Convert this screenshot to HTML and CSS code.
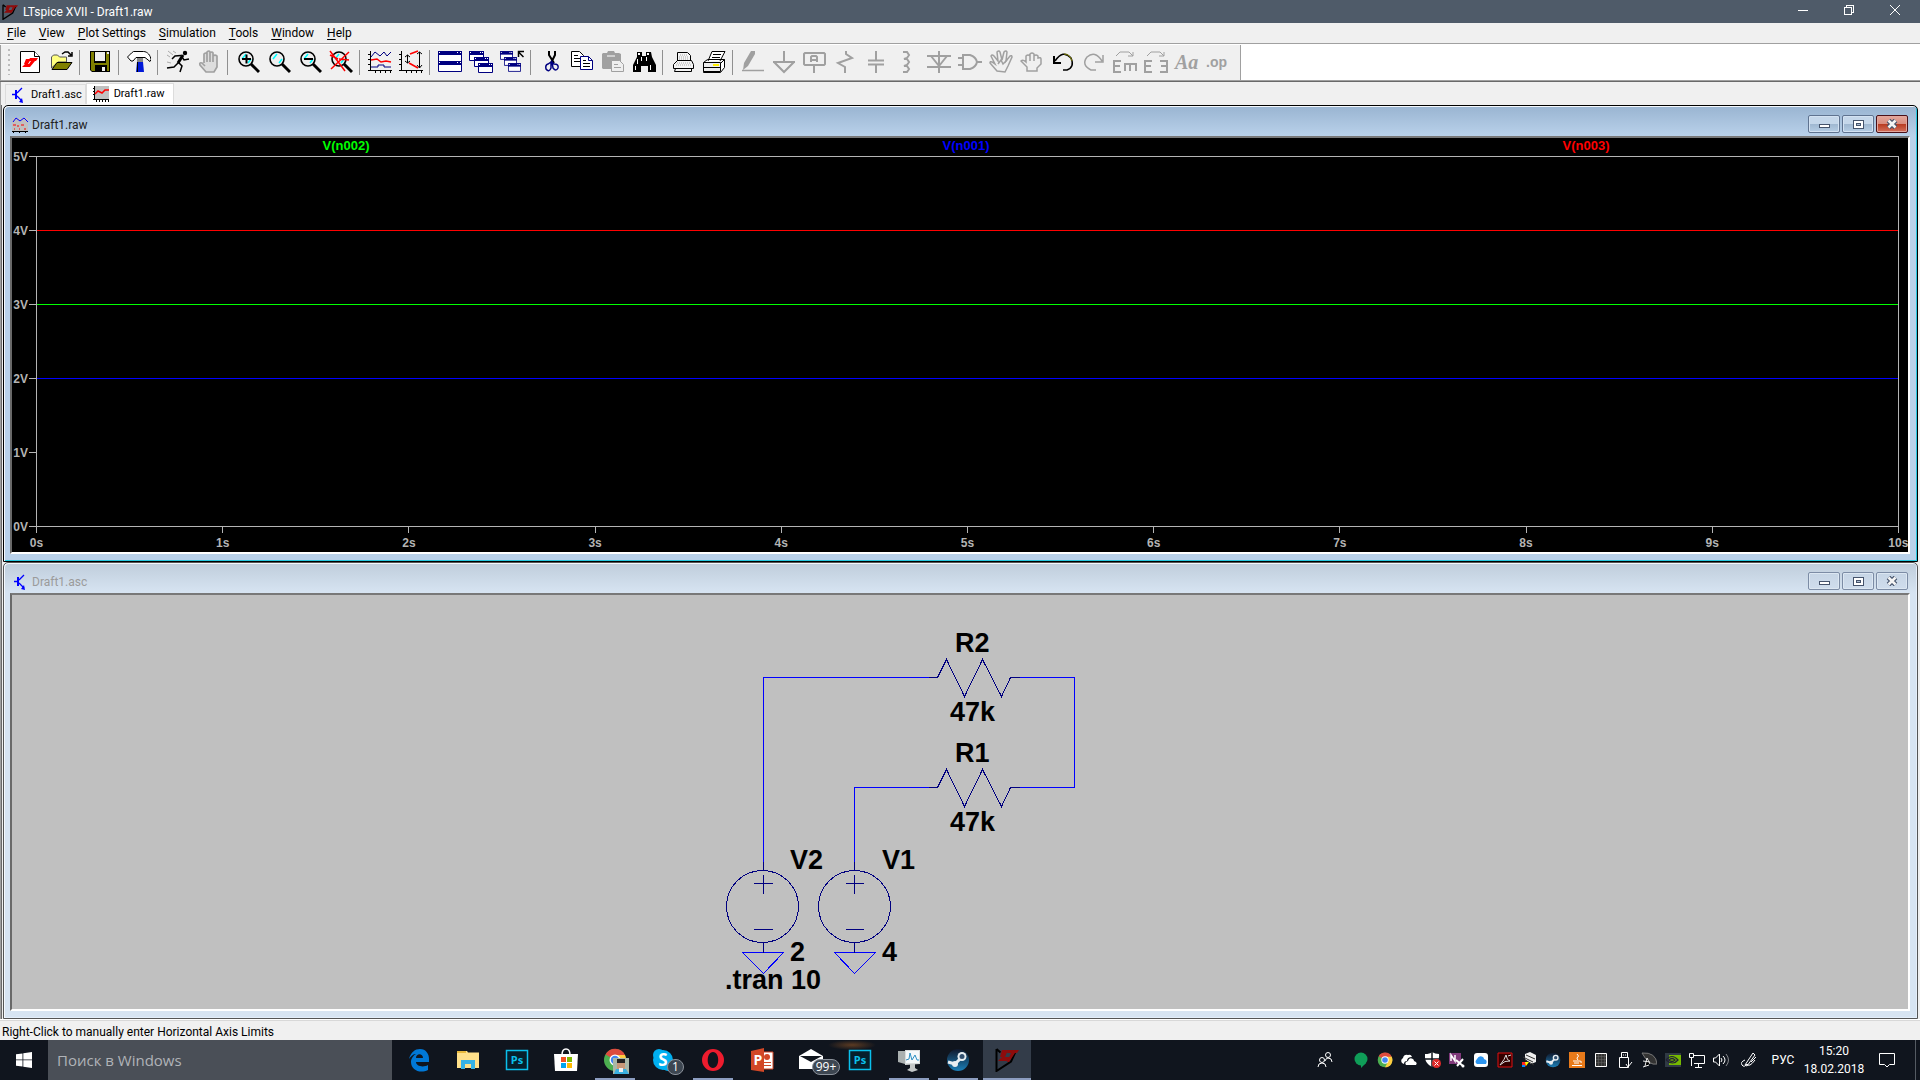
FILE: index.html
```html
<!DOCTYPE html>
<html lang="en">
<head>
<meta charset="utf-8">
<title>LTspice XVII - Draft1.raw</title>
<link rel="stylesheet" href="styles.css">
</head>
<body>
<svg class="defs" aria-hidden="true">
  <symbol id="lt" viewBox="0 0 24 24"><path d="M1.500 1v22L16 13.500 21 2.500M1.500 1l4 3.500" fill="none" stroke="#000" stroke-width="2"/><path d="M7 2h6l-3 7h5l-3 4H3l4-4h-2zM13 2h11l-2 3h-2l-6 9h-2l4-9h-4z" fill="#8e0c0c"/></symbol>
  <symbol id="npn" viewBox="0 0 16 16"><path d="M2 7.500h4M7 6l5-5M7 9l5 5" fill="none" stroke="#00f" stroke-width="1.300"/><path d="M5 3h2v9H5zM13 16l-4-1 3-4z" fill="#00f"/></symbol>
  <symbol id="bin" viewBox="0 0 11 8"><path d="M0 4h11v4H0z" fill="#45536b"/><path d="M1 5h9v2H1z" fill="#fff"/></symbol>
  <symbol id="bmax" viewBox="0 0 11 9"><path d="M0 0h11v9H0z" fill="#45536b"/><path d="M1 1h9v7H1z" fill="#fff"/><path d="M3 3h5v3H3z" fill="#45536b"/><path d="M4 4h3v1H4z" fill="#aebfd2"/></symbol>
  <symbol id="bx" viewBox="0 0 12 10"><path d="M2.500 1.500l7 7M9.500 1.500l-7 7" stroke="#45536b" stroke-width="5"/><path d="M2.500 1.500l7 7M9.500 1.500l-7 7" stroke="#f4f4f4" stroke-width="2.600"/></symbol>
  <symbol id="lens" viewBox="0 0 24 24"><path d="M14 14l8 8" stroke="#000" stroke-width="3"/><circle cx="9" cy="9" r="7" fill="#eee" stroke="#000" stroke-width="1.600"/><path d="M5 9l4-5M11 13l3-4" stroke="#0ff" stroke-width="1.500"/></symbol>
  <symbol id="chrome" viewBox="0 0 24 24"><circle cx="12" cy="12" r="11" fill="#4caf50"/><path d="M12 12 2.500 6.500A11 11 0 0 1 22 7z" fill="#dd4b3e"/><path d="M12 7h10a11 11 0 0 1-10 16l5-9z" fill="#ffcd40"/><circle cx="12" cy="12" r="5.500" fill="#fff"/><circle cx="12" cy="12" r="4.200" fill="#4285f4"/></symbol>
  <symbol id="steam" viewBox="0 0 24 24"><linearGradient id="sg" x2="0" y2="1"><stop stop-color="#10182c"/><stop offset="1" stop-color="#1b7fb8"/></linearGradient><circle cx="12" cy="12" r="11" fill="url(#sg)"/><path d="M2 14l7 2 6-6" stroke="#e8eef2" stroke-width="3" fill="none"/><circle cx="16" cy="8.500" r="4.500" fill="#e8eef2"/><circle cx="16" cy="8.500" r="2.500" fill="#33506f"/><circle cx="9" cy="16" r="3" fill="#e8eef2"/></symbol>
  <symbol id="ps" viewBox="0 0 24 24"><path d="M1.500 2.500h21v19h-21z" fill="#061f2c" stroke="#0bc0ec" stroke-width="1.500"/></symbol>
  <symbol id="smallwin" viewBox="0 0 15 10"><path d="M.5.5h14v9H.5z" fill="#fff" stroke="#000080"/><path d="M0 0h15v4H0z" fill="#000080"/><path d="M1 1h1v1H1zM11 1h1v1h-1zM13 1h1v1h-1z" fill="#fff"/></symbol>
</svg>

<header class="titlebar">
  <svg class="i16"><use href="#lt"/></svg>
  <h1>LTspice XVII - Draft1.raw</h1>
  <div class="sysbuttons">
    <button aria-label="Minimize"><svg class="i10" viewBox="0 0 10 10"><path d="M0 5.500h10" class="wl"/></svg></button>
    <button aria-label="Restore"><svg class="i10" viewBox="0 0 10 10"><path d="M.5 2.500h7v7h-7zM2.500 2V.5h7v7H8" class="wl"/></svg></button>
    <button aria-label="Close"><svg class="i10 smooth" viewBox="0 0 10 10"><path d="M0 0l10 10M10 0L0 10" class="wl"/></svg></button>
  </div>
</header>

<nav class="menu">
  <button><u>F</u>ile</button><button><u>V</u>iew</button><button><u>P</u>lot Settings</button><button><u>S</u>imulation</button><button><u>T</u>ools</button><button><u>W</u>indow</button><button><u>H</u>elp</button>
</nav>

<div class="toolrow">
<div class="toolbar" role="toolbar">
  <span class="grip"></span>
  <button aria-label="New"><svg viewBox="0 0 24 24"><path d="M2.500 1.500h14l5 5v16h-19z" fill="#fff" stroke="#000"/><path d="M16.500 1.500v5h5" fill="#fff" stroke="#000"/><path d="M8 9h5l-3 5h3l-2 3H4l3-3H6zM12 8h8l-2 3h-1l-5 6h-3l4-6h-3z" fill="#f00"/></svg></button>
  <button aria-label="Open"><svg viewBox="0 0 24 24"><path d="M2.500 18V7l2-2h4l2 2h7v5H9z" fill="#ffff80" stroke="#555"/><path d="M3 19.500 8 12.500h15l-5 7z" fill="#808000" stroke="#000"/><path d="M13 4l3-2h3l3 3M23 2v4h-4" fill="none" stroke="#000" stroke-width="1.500"/></svg></button>
  <span class="sep"></span>
  <button aria-label="Save"><svg viewBox="0 0 24 24"><path d="M2 1h20v21H4l-2-2z" fill="#000"/><path d="M3 2h3v11h12V2h3v19h-2v-6H7v6H4l-1-1z" fill="#808000"/><path d="M7 2h10v9H7z" fill="#f0f0f0"/><path d="M14 17h3v4h-3zM19 2h2v2h-2z" fill="#f0f0f0"/></svg></button>
  <span class="sep"></span>
  <button aria-label="Control panel"><svg viewBox="0 0 24 24"><path d="M.5 7l4-4 2-1.500h10c4 0 7 4 7.500 8l-1 2-5-4H9L6 11H4z" fill="#fff" stroke="#000"/><path d="M10 8h6v5h-6z" fill="#888"/><path d="M10 12h6l1 10H9z" fill="#0018d8"/><path d="M10 12h1v10h-1z" fill="#000"/></svg></button>
  <span class="sep"></span>
  <button aria-label="Run"><svg viewBox="0 0 24 24"><circle cx="19" cy="3" r="2.200"/><path d="M17 5l-5 8" stroke="#000" stroke-width="3"/><path d="M15 5.500 9 6l-3 3M16 7l2 3 5-1M12 13l-4 4-7 1M12 12l4 4-2 6" fill="none" stroke="#000" stroke-width="1.500"/><path d="M2 1l5 4M1 5l3 2M7 1l3 2M1 12l4 1" stroke="#aaa" fill="none"/></svg></button>
  <button aria-label="Halt"><svg viewBox="0 0 24 24"><path d="M7 13V4q2-2 3 0V2q2-2 3 0v1q2-2 3 0v3q2-2 4 0v11l-3 5H9L3 15q-1-3 2-2l3 3M10 4v8M13 3v9M16 4v8" fill="#ddd" stroke="#a0a0a0" stroke-width="1.700"/></svg></button>
  <span class="sep"></span>
  <button aria-label="Zoom in"><svg viewBox="0 0 24 24"><use href="#lens" x="1"/><path d="M6 9h9M10.500 4.500v9" stroke="#000" stroke-width="2"/></svg></button>
  <button aria-label="Zoom area"><svg viewBox="0 0 24 24"><use href="#lens" x="1"/></svg></button>
  <button aria-label="Zoom out"><svg viewBox="0 0 24 24"><use href="#lens" x="1"/><path d="M6 9h9" stroke="#000" stroke-width="2"/></svg></button>
  <button aria-label="Zoom full"><svg viewBox="0 0 24 24"><use href="#lens" x="1"/><path d="M1 1l15 20M20 2 2 19M1 5l8 4M10 9l10 1" stroke="#f00" stroke-width="1.500"/></svg></button>
  <span class="sep"></span>
  <button aria-label="Autorange"><svg viewBox="0 0 24 24"><path d="M2.500 1v20M0 20.500h24M0 4.500h2M0 9.500h2M0 14.500h2M7.500 21v2M12.500 21v2M17.500 21v2M22.500 21v2" stroke="#000"/><path d="M3 7l4-5 5 4 4-4 3 4 4-4M3 17h7v-2h6v2h7" fill="none" stroke="#000080"/><path d="M3 10l6-1 4 3 5-1 5 1" fill="none" stroke="#f00" stroke-width="1.500"/></svg></button>
  <button aria-label="Fit"><svg viewBox="0 0 24 24"><path d="M2.500 1v20M0 20.500h24M0 4.500h2M0 9.500h2M0 14.500h2M7.500 21v2M12.500 21v2M17.500 21v2M22.500 21v2M8.500 5v8M6 7l2.500-2L11 7M6 11l2.500 2 2.500-2M20.500 2v16M18 4l2.500-2L23 4M18 15l2.500 3 2.500-3" fill="none" stroke="#000"/><path d="M19 1l-8 3M10 13l9 5" stroke="#f00" stroke-width="1.500"/></svg></button>
  <span class="sep"></span>
  <button aria-label="Tile"><svg viewBox="0 0 24 24"><path d="M.5 1.500h23v20H.5z" fill="#fff" stroke="#000080"/><path d="M0 1h24v4H0zM0 11h24v4H0z" fill="#000080"/><path d="M1 2h1v1H1zM19 2h1v1h-1zM22 2h1v1h-1zM1 12h1v1H1zM19 12h1v1h-1zM22 12h1v1h-1z" fill="#fff"/></svg></button>
  <button aria-label="Cascade"><svg viewBox="0 0 24 24"><use href="#smallwin" width="15" height="10" y="1"/><use href="#smallwin" width="15" height="10" x="5" y="7"/><use href="#smallwin" width="15" height="10" x="9" y="13"/></svg></button>
  <button aria-label="Close all"><svg viewBox="0 0 24 24"><use href="#smallwin" width="13" height="9" y="1"/><use href="#smallwin" width="13" height="9" x="4" y="7"/><use href="#smallwin" width="13" height="9" x="8" y="13"/><path d="M18.500 7V1.500h6M18.500 2l5 5" fill="none" stroke="#000" stroke-width="1.500"/></svg></button>
  <span class="sep"></span>
  <button aria-label="Cut"><svg viewBox="0 0 24 24"><path d="M10 1v4l5 8M16 1v4l-4 8" fill="none" stroke="#000" stroke-width="2"/><path d="M12 12l-3 2q-3 1-2 5 3 4 5-1zM13 12l1 6q3 4 5 0 1-4-4-4z" fill="none" stroke="#000080" stroke-width="1.500"/></svg></button>
  <button aria-label="Copy"><svg viewBox="0 0 24 24"><path d="M1.500 1.500h8l4 4v11h-12z" fill="#fff" stroke="#000"/><path d="M4 5.500h4M4 8.500h6M4 11.500h6" stroke="#000"/><path d="M10.500 6.500h8l4 4v9h-12z" fill="#fff" stroke="#000080"/><path d="M18.500 6.500v4h4" fill="none" stroke="#000080"/><path d="M13 10.500h3M13 13.500h7M13 16.500h7" stroke="#000"/></svg></button>
  <button aria-label="Paste"><svg viewBox="0 0 24 24"><path d="M1 4l1-1h4l1-2h6l1 2h4l2 1v7h-8v8H2l-1-1z" fill="#a0a0a0"/><path d="M6 6h8" stroke="#fff"/><path d="M10.500 10.500h8l4 4v7h-12z" fill="#eee" stroke="#a0a0a0"/><path d="M13 14.500h4M13 17.500h7" stroke="#a0a0a0"/></svg></button>
  <button aria-label="Find"><svg viewBox="0 0 24 24"><path d="M5 2h5v4h4V2h5l1 5 4 8v7h-8v-6H9v6H1v-7l4-8z" fill="#000"/><path d="M6 3h2v2H6zM15 3h2v2h-2zM5 9h1v5H5zM9 7h1v4H9zM14 7h1v4h-1zM3 16h1v4H3zM18 15h1v5h-1z" fill="#fff"/></svg></button>
  <span class="sep"></span>
  <button aria-label="Print"><svg viewBox="0 0 24 24"><path d="M6.500 11V2.500h10l3 3V11M2.500 14.500l4-4h14l2 4v4h-20zM4.500 18.500l-1 3h17v-3" fill="#f4f4f4" stroke="#000"/><path d="M9 5h7M8 7h9M8 9h9M6 13h13M5 15h15" stroke="#aaa" stroke-dasharray="1 1"/></svg></button>
  <button aria-label="Print setup"><svg viewBox="0 0 24 24"><path d="M6 11l4-9.500h13L18 11M1.500 12.500l4-3h17l-4 4h-17v9h17l4-5v-8" fill="#fff" stroke="#000"/><path d="M1.500 12.500h17v9h-17zM1.500 17.500h17" fill="#eee" stroke="#000"/><path d="M11 4.500h8M10 7.500h8" stroke="#000"/><path d="M11 15h6" stroke="#fe0" stroke-width="2"/></svg></button>
  <span class="sep"></span>
  <button aria-label="Wire" disabled><svg viewBox="0 0 24 24"><path d="M2 20 3 13 10 1h4v3L7 16z" class="gf"/><path d="M1 20.500h22" class="g"/></svg></button>
  <button aria-label="Ground" disabled><svg viewBox="0 0 24 24"><path d="M12 1v11M1 12h22M2 12l10 10 10-10" class="g2"/></svg></button>
  <button aria-label="Label" disabled><svg viewBox="0 0 24 24"><path d="M2 3h19l1 1v10l-1 1H2l-1-1V4zM11 15v8M8 12V7l1-1h4l1 1v5M8 10h6" class="g2"/></svg></button>
  <button aria-label="Resistor" disabled><svg viewBox="0 0 24 24"><path d="M12 1v3l6 4-14 5 7 4v6" class="g2"/></svg></button>
  <button aria-label="Capacitor" disabled><svg viewBox="0 0 24 24"><path d="M11 1v9M3 10.500h16M3 14.500h16M11 15v8" class="g2"/></svg></button>
  <button aria-label="Inductor" disabled><svg viewBox="0 0 24 24"><path d="M7 2h4l2 3-2 3-3 1h3l2 3-2 3-3 1h3l2 3-2 3H7" class="g2"/></svg></button>
  <button aria-label="Diode" disabled><svg viewBox="0 0 24 24"><path d="M12 1v22M0 6h24M4 6l8 10 8-10M0 17h24" class="g2"/></svg></button>
  <button aria-label="Component" disabled><svg viewBox="0 0 24 24"><path d="M5 5h7q6 2 7 7-1 5-7 7H5zM0 8h5M0 15h5M19 12h5" class="g2"/></svg></button>
  <button aria-label="Move" disabled><svg viewBox="0 0 24 24"><path d="M8 21l-7-8q0-2 2-1l3 2-4-8q1-2 3 0l4 5-1-9q2-2 3 0l2 8 2-8q2-2 3 0l-1 9 4-5q2-1 2 1l-4 9-3 6z" class="g"/><path d="M9 14l3-4 2 4 4-4" class="g"/></svg></button>
  <button aria-label="Drag" disabled><svg viewBox="0 0 24 24"><path d="M7 21v-4l-6-6q2-2 5 1V6q2-2 4 0V4q2-2 4 0v2q2-2 4 0v2q3-1 3 1v5l-4 4v3zM10 6v5M14 6v5" class="g"/></svg></button>
  <button aria-label="Undo"><svg viewBox="0 0 24 24"><path d="M4 11q8-12 16-3 4 9-4 12h-4" fill="none" stroke="#000" stroke-width="1.500"/><path d="M3 6v7h7" fill="none" stroke="#000" stroke-width="2"/><path d="M13 4q6 0 8 7" fill="none" stroke="#808000"/></svg></button>
  <button aria-label="Redo" disabled><svg viewBox="0 0 24 24"><path d="M20 11Q13 0 5 7q-6 8 4 13h5M21 5v7h-8" class="g"/></svg></button>
  <button aria-label="Rotate" disabled><svg viewBox="0 0 24 24"><path d="M8 11H1v11h7M1 16h6M11 14h13M12 14v7M17 14v7M23 14v7" class="g2"/><path d="M3 6l4-4h9l4 4M20 2v4h-5" class="g1"/></svg></button>
  <button aria-label="Mirror" disabled><svg viewBox="0 0 24 24"><path d="M8 11H1v11h7M1 16h6M16 11h7v11h-7M17 16h6" class="g2"/><path d="M3 6l4-4h9l4 4M20 2v4h-5" class="g1"/></svg></button>
  <button aria-label="Text" disabled class="txt aa">Aa</button>
  <button aria-label="SPICE directive" disabled class="txt op">.op</button>
</div>
</div>

<div class="tabs" role="tablist">
  <button role="tab" class="tab"><svg class="i16"><use href="#npn"/></svg>Draft1.asc</button>
  <button role="tab" class="tab active" aria-selected="true"><svg class="i16" viewBox="0 0 16 16"><path d="M1 0h15v14H1z" fill="#c0c0c0"/><path d="M1.500 0v14M0 13.500h16M0 2.500h1M0 5.500h1M0 8.500h1M3.500 14v2M6.500 14v2M9.500 14v2M12.500 14v2M15.500 14v2" stroke="#000"/><path d="M2 8l3-3 4 2 3-3h4" fill="none" stroke="#f00" stroke-width="1.500"/></svg>Draft1.raw</button>
</div>

<main class="mdi">
  <section class="window focus">
    <header class="caption">
      <svg class="i16" viewBox="0 0 16 16"><path d="M0 1h16v13H0z" fill="#c0c0c0"/><path d="M0 14.500h16M1.500 15v1M7.500 15v1M13.500 15v1" stroke="#000"/><path d="M1 5l3-4 4 3 4-3 4 4" fill="none" stroke="#00f"/><path d="M1 8h3M5 9h2M9 8h3M2 12h1M7 12h1M12 12h2" stroke="#f00"/></svg>
      <h2>Draft1.raw</h2>
      <button aria-label="Minimize"><svg width="11" height="8"><use href="#bin"/></svg></button>
      <button aria-label="Maximize"><svg width="11" height="9"><use href="#bmax"/></svg></button>
      <button aria-label="Close" class="close"><svg width="12" height="10" class="smooth"><use href="#bx"/></svg></button>
    </header>
    <div class="client plot">
      <div class="legend"><span class="green">V(n002)</span><span class="blue">V(n001)</span><span class="red">V(n003)</span></div>
      <div class="yaxis"><span>5V</span><span>4V</span><span>3V</span><span>2V</span><span>1V</span><span>0V</span></div>
      <svg class="traces"><line x1="0" x2="100%" y1="20%" y2="20%" stroke="#f00"/><line x1="0" x2="100%" y1="40%" y2="40%" stroke="#0f0"/><line x1="0" x2="100%" y1="60%" y2="60%" stroke="#00f"/></svg>
      <div class="xaxis"><span>0s</span><span>1s</span><span>2s</span><span>3s</span><span>4s</span><span>5s</span><span>6s</span><span>7s</span><span>8s</span><span>9s</span><span>10s</span></div>
    </div>
  </section>

  <section class="window">
    <header class="caption">
      <svg class="i16"><use href="#npn"/></svg>
      <h2>Draft1.asc</h2>
      <button aria-label="Minimize"><svg width="11" height="8"><use href="#bin"/></svg></button>
      <button aria-label="Maximize"><svg width="11" height="9"><use href="#bmax"/></svg></button>
      <button aria-label="Close"><svg width="12" height="10" class="smooth"><use href="#bx"/></svg></button>
    </header>
    <div class="client sheet">
      <svg class="circuit" viewBox="720 602 480 400">
        <g fill="none" stroke="#00f" transform="translate(.5 .5)">
          <path d="M763 870V677H928M1018 677H1074V787H1018M928 787H854V870M742 952H783L763 973ZM834 952H875L854 973Z"/>
          <g stroke="#000080">
            <path d="M928 677H937L946 659 964 696 982 659 1001 696 1010 677H1019M928 787H937L946 769 964 806 982 769 1001 806 1010 787H1019"/>
            <path d="M753 883H772M763 874V893M753 929H772M763 942V952M763 861V870M845 883H863M854 874V893M845 929H863M854 942V952M854 861V870"/>
            <circle cx="762" cy="906" r="36"/><circle cx="854" cy="906" r="36"/>
          </g>
        </g>
        <g class="parts">
          <text x="955" y="652">R2</text><text x="950" y="721">47k</text>
          <text x="955" y="762">R1</text><text x="950" y="831">47k</text>
          <text x="790" y="869">V2</text><text x="882" y="869">V1</text>
          <text x="790" y="961">2</text><text x="882" y="961">4</text>
          <text x="725" y="989">.tran 10</text>
        </g>
      </svg>
    </div>
  </section>
</main>

<footer class="status">Right-Click to manually enter Horizontal Axis Limits</footer>

<div class="taskbar">
  <button class="start" aria-label="Start"><svg class="i16" viewBox="0 0 16 16"><path d="M0 2.300 6.500 1.400v6.100H0zM7.300 1.300 16 0v7.500H7.300zM0 8.300h6.500v6.300L0 13.700zM7.300 8.300H16V16l-8.700-1.200z" fill="#fff"/></svg></button>
  <input class="search" type="text" placeholder="Поиск в Windows" aria-label="Поиск в Windows">
  <div class="apps">
    <button aria-label="Edge"><svg viewBox="0 0 24 24"><path d="M2 11C4 4 8 1 13 1c6 0 9 5 9 10v3H9c0 4 7 6 12 3v5c-8 4-17 0-17-8 0-4 3-7 5-8-3 0-5 2-7 5zm7-1h7c0-5-7-5-7 0z" fill="#0078d7"/></svg></button>
    <button aria-label="Explorer"><svg viewBox="0 0 24 24"><path d="M1 3h10l1 1.500h11V20H1z" fill="#ffe08a"/><path d="M1 3h9v2H1z" fill="#e9b93c"/><path d="M5 21v-9h14v9h-4v-5H9v5z" fill="#35b2e6"/></svg></button>
    <button aria-label="Photoshop"><svg viewBox="0 0 24 24"><use href="#ps"/><text x="12" y="16" class="pst">Ps</text></svg></button>
    <button aria-label="Store"><svg viewBox="0 0 24 24"><path d="M8 7q0-6 4-6t4 6" fill="none" stroke="#fff" stroke-width="1.500"/><path d="M0 6h24l-1 17H1z" fill="#fff"/><path d="M7 9h5v5H7z" fill="#f25022"/><path d="M13 9h5v5h-5z" fill="#7fba00"/><path d="M7 15h5v5H7z" fill="#00a4ef"/><path d="M13 15h5v5h-5z" fill="#ffb900"/></svg></button>
    <button aria-label="Chrome" class="run"><svg viewBox="0 0 24 24"><use href="#chrome"/><path d="M10 10h16v16H10z" fill="#a9b8a8"/><path d="M14 12h8v9h-8z" fill="#c89878"/><path d="M14 11h8v4h-8z" fill="#222"/><path d="M11 26l2-5h10l3 5z" fill="#3ab0e0"/><path d="M16 20h4v4h-4z" fill="#eee"/></svg></button>
    <button aria-label="Skype"><svg viewBox="0 0 24 24"><circle cx="7" cy="7" r="6" fill="#00aff0"/><circle cx="11" cy="12" r="10" fill="#00aff0"/><circle cx="16" cy="17" r="6" fill="#00aff0"/><text x="11" y="18" class="sk">S</text></svg><span class="badge one">1</span></button>
    <button aria-label="Opera" class="run"><svg viewBox="0 0 24 24"><path d="M12 1a11 11 0 1 0 0 22 11 11 0 0 0 0-22m0 3c7 0 7 16 0 16S5 4 12 4" fill="#ee1c2e" fill-rule="evenodd"/></svg></button>
    <button aria-label="PowerPoint"><svg viewBox="0 0 24 24"><path d="M12 4h11v17H12z" fill="#fff" stroke="#d24726"/><circle cx="17" cy="9" r="3" fill="#d24726"/><path d="M14 14.500h7M14 17.500h7" stroke="#d24726"/><path d="M1 3l13-3v24L1 22z" fill="#d24726"/><text x="8" y="17" class="pp">P</text></svg></button>
    <button aria-label="Mail"><svg viewBox="0 0 24 24"><path d="M0 8l12-7 12 7v13H0z" fill="#fff"/><path d="M1 8h22l-11 6z" fill="#10151d"/></svg><span class="badge many">99+</span></button>
    <button aria-label="Photoshop 2"><svg viewBox="0 0 24 24"><use href="#ps"/><text x="12" y="16" class="pst">Ps</text></svg></button>
    <button aria-label="Monitor" class="run"><svg viewBox="0 0 24 24"><path d="M1 3h7v13l-7-2z" fill="#aab0b0"/><path d="M8 2h15v14l-15 1z" fill="#d8dcdc"/><path d="M9 3h13v12H9z" fill="#f4f8fa"/><path d="M9 12l3-1 1-6 2 7 3-5 2 5h2" fill="none" stroke="#2b8fc4"/><path d="M13 16h5v4l3 2-6 2-5-2 3-2z" fill="#c4c8c8"/></svg></button>
    <button aria-label="Steam" class="run"><svg viewBox="0 0 24 24"><use href="#steam"/></svg></button>
    <button aria-label="LTspice" class="run current"><svg viewBox="0 0 24 24"><use href="#lt"/></svg></button>
  </div>
  <div class="tray">
    <button class="people" aria-label="People"><svg viewBox="0 0 16 16" class="o"><circle cx="5" cy="8" r="2.500"/><path d="M1 15q0-4 4-4t4 4"/><circle cx="11" cy="3" r="2.500"/><path d="M8 9q1-3 3-3 4 0 4 4"/></svg></button>
    <button aria-label="Hangouts"><svg viewBox="0 0 16 16"><circle cx="8" cy="7" r="6.500" fill="#0f9d58"/><path d="M8 12v4l5-5z" fill="#0f9d58"/></svg></button>
    <button aria-label="Chrome"><svg viewBox="0 0 16 16"><use href="#chrome"/></svg></button>
    <button aria-label="OneDrive"><svg viewBox="0 0 16 16"><path d="M1 11q-2-3 1-5 1-4 5-3 3-1 4 2-5 0-5 4-3 0-3 3z" fill="#fff"/><path d="M5 13q-2-3 2-4 1-4 5-2 1 1 1 2 4 1 2 4z" fill="#fff"/></svg></button>
    <button aria-label="Defender"><svg viewBox="0 0 16 16"><path d="M0 2q5 0 7-2 3 2 7 2 1 9-7 13Q-1 11 0 2" fill="#fff"/><path d="M7 0v15M0 7h14" stroke="#10151d" stroke-width="1.500"/><circle cx="11.500" cy="11.500" r="4.500" fill="#e02828"/><path d="M9.500 9.500l4 4M13.500 9.500l-4 4" stroke="#fff"/></svg></button>
    <button aria-label="OneNote clipper"><svg viewBox="0 0 16 16"><path d="M0 1h12v11H0z" fill="#80397b"/><path d="M2 9V3l4 6V3" fill="none" stroke="#fff" stroke-width="1.500"/><path d="M7 8l7 6M14 7l-6 7" stroke="#fff" stroke-width="2"/><circle cx="14" cy="14" r="1.500" fill="#fff"/></svg></button>
    <button aria-label="iCloud"><svg viewBox="0 0 16 16"><rect x="1" y="1" width="14" height="14" rx="3" fill="#fff"/><path d="M4 12q-3-2 0-5 2-4 6-2 1 1 1 2 4 1 2 5z" fill="#2c95f0"/></svg></button>
    <button aria-label="Updater"><svg viewBox="0 0 16 16"><path d="M1 1h14v14H1z" fill="#300" stroke="#e01010"/><path d="M3 13Q8 7 9 3q1 6 4 6Q8 8 3 13M11 4l3-1" fill="none" stroke="#ddd"/></svg></button>
    <button aria-label="Scanner"><svg viewBox="0 0 16 16"><path d="M4 2l5-2 6 3v7l-5 2-6-5z" fill="#eee"/><path d="M2 5l10 5M5 3l9 4M4 8l9 5" stroke="#333"/><path d="M1 10h6l-3 5H1z" fill="#f22"/><path d="M4 10h4l-3 4z" fill="#ff0"/><path d="M1 13h3v2H1z" fill="#08f"/></svg></button>
    <button aria-label="Steam"><svg viewBox="0 0 16 16"><use href="#steam"/></svg></button>
    <button aria-label="Java"><svg viewBox="0 0 16 16"><path d="M0 0h16v16H0z" fill="#e87a1a"/><path d="M8 2q3 2 0 4 0 1 1 2M4 9h7q2 0 1 2M5 11h5M3 13.500h10" fill="none" stroke="#fff"/></svg></button>
    <button aria-label="Grid"><svg viewBox="0 0 16 16"><path d="M2.500 1.500h11v13h-11z" fill="#333" stroke="#fff"/><path d="M5.500 2v12M8.500 2v12M11.500 2v12M3 4.500h10M3 7.500h10M3 10.500h10" stroke="#666" stroke-width=".5"/></svg></button>
    <button aria-label="USB"><svg viewBox="0 0 16 16" class="o"><path d="M4.500 5V.5h6V5M2.500 5.500h9v10h-9zM9 12l2 3 4-5M6 3h1M8 3h1"/></svg></button>
    <button aria-label="Satellite"><svg viewBox="0 0 16 16"><path d="M1 1Q15 0 16 12 8 14 1 1" fill="#333" stroke="#777"/><path d="M2 9l7 1M4 14l2-8 3 6M2 15l6-2" stroke="#eee"/></svg></button>
    <button aria-label="NVIDIA"><svg viewBox="0 0 16 16"><path d="M0 1h16v14H0z" fill="#303a44"/><path d="M4 3h12v10H4z" fill="#76b900"/><path d="M1 8q6-7 12 0-5 6-12 0M4 8q3-3 6 0-3 3-6 0" fill="none" stroke="#223" stroke-width="1.200"/></svg></button>
    <button aria-label="Network"><svg viewBox="0 0 16 16" class="o"><path d="M4 3.500h11.500v8H5M9.500 12v3M6 15.500h7M.5 1.500h4v4h-4zM2.500 6v8"/></svg></button>
    <button aria-label="Volume"><svg viewBox="0 0 16 16" class="o"><path d="M.5 6h2l4-4v12l-4-4h-2zM8 6q2 2 0 4M10 4q4 4 0 8"/><path d="M13 2q5 6 0 12" opacity=".5"/></svg></button>
    <button class="pen" aria-label="Ink"><svg viewBox="0 0 16 16" class="o"><path d="M4 13L12 1l2 2-8 11zM4 8q-5 2-3 5t5-1q2 4 8-4M10 10l5-5"/></svg></button>
    <button class="lang">РУС</button>
    <button class="clock"><time>15:20</time><time>18.02.2018</time></button>
    <button class="center" aria-label="Notifications"><svg viewBox="0 0 16 16" class="o"><path d="M.5 1.500h15v11h-5L8 15l-2.500-2.500h-5z"/></svg></button>
    <span class="peek"></span>
  </div>
</div>
</body>
</html>
```
FILE: styles.css
```css
* { box-sizing: border-box; }
body {
  margin: 0;
  height: 100vh;
  display: flex;
  flex-direction: column;
  background: #f0f0f0;
  color: #000;
  font: 12px/16px Roboto, "Noto Sans", sans-serif;
  overflow: hidden;
}
button {
  margin: 0;
  padding: 0;
  border: 0;
  background: none;
  color: inherit;
  font: inherit;
}
h1, h2 { margin: 0; font: inherit; }
svg { display: block; flex: none; }
.defs { position: absolute; width: 0; height: 0; }
.i16 { width: 16px; height: 16px; }
.i10 { width: 10px; height: 10px; shape-rendering: crispEdges; }
.smooth { shape-rendering: auto; }
.wl { fill: none; stroke: #fff; }

.titlebar {
  height: 23px;
  display: flex;
  align-items: center;
  gap: 5px;
  padding-left: 2px;
  background: #4f5b69;
  color: #fff;
}
.sysbuttons { display: flex; align-self: stretch; margin-left: auto; }
.sysbuttons button { width: 46px; display: flex; justify-content: center; padding-top: 5px; }
.sysbuttons button:last-child { width: 45px; margin-right: 3px; }

.menu { height: 20px; display: flex; align-items: center; gap: 13px; padding-left: 7px; }
.menu u { text-underline-offset: 2px; }

.toolrow {
  height: 39px;
  padding-top: 1px;
  display: flex;
  background: #fff;
  border-top: 1px solid #a0a0a0;
  border-bottom: 1px solid #696969;
  box-shadow: inset 0 -1px #a0a0a0;
}
.toolbar {
  display: flex;
  align-items: center;
  padding: 0 6px 1px 7px;
  height: 36px;
  background: #f0f0f0;
  border-right: 1px solid #a0a0a0;
  border-bottom: 1px solid #a0a0a0;
  border-left: 1px solid #a0a0a0;
}
.toolbar button { width: 31px; padding-left: 3px; }
.toolbar svg { width: 24px; height: 24px; }
.grip { width: 7px; height: 26px; background: repeating-linear-gradient(#bbb 0 2px, transparent 2px 5px) no-repeat 0 0 / 2px 100%; }
.sep { width: 8px; height: 25px; background: linear-gradient(#909090, #909090) no-repeat 2px 0 / 1px 100%; }
.g, .g1, .g2 { fill: none; stroke: #a0a0a0; stroke-width: 1.5; }
.g1 { stroke-width: 1; }
.g2 { stroke-width: 2; }
.gf { fill: #a0a0a0; }
.toolbar .txt { color: #a0a0a0; text-align: left; line-height: 24px; font-weight: bold; }
.toolbar .aa { font-family: "Liberation Serif", serif; font-style: italic; font-size: 20px; }
.toolbar .op { font-family: "Liberation Sans", sans-serif; font-size: 14px; }

.tabs { height: 23px; display: flex; align-items: flex-start; padding: 1px 0 0 4px; border-left: 1px solid #a0a0a0; }
.tab {
  display: flex;
  align-items: center;
  gap: 5px;
  height: 20px;
  margin-top: 1px;
  padding: 0 3px 0 4px;
  font-size: 11px;
  border: 1px solid #dcdcdc;
  border-bottom: 0;
}
.tab.active { height: 21px; margin-top: 0; padding: 0 8px 0 6px; background: #fff; }

.mdi { flex: 1 1 0px; min-height: 0; display: flex; flex-direction: column; padding: 0 2px 0 3px; box-shadow: inset 1px 0 #a0a0a0, inset 2px 0 #696969; }
.window {
  --line: #555;
  --edge: #e4eefa;
  flex: 1 1 0px;
  min-height: 0;
  display: flex;
  flex-direction: column;
  padding: 0 7px 7px 6px;
  border: 1px solid var(--line);
  border-radius: 5px 5px 0 0;
  background: linear-gradient(#bfcddb, #d7e4f2) no-repeat 0 0 / 100% 30px, #d7e4f2;
  box-shadow: inset 1px 1px #f4f8fc, inset -1px -1px var(--edge);
}
.window.focus {
  --line: #000;
  --edge: #27c8e0;
  background: linear-gradient(#99b4d1, #b9d1ea) no-repeat 0 0 / 100% 30px, #b9d1ea;
}
.caption { height: 30px; flex: none; display: flex; align-items: center; gap: 2px; padding: 8px 2px 0 2px; color: #9b9b9b; }
.focus .caption { color: #222; }
.caption h2 { flex: 1; padding-left: 2px; }
.caption button {
  width: 32px;
  height: 18px;
  display: flex;
  align-items: center;
  justify-content: center;
  align-self: flex-start;
  margin-top: 1px;
  border: 1px solid #7c8ca5;
  border-radius: 2px;
  background: linear-gradient(#c6d5e5, #cfdded);
  box-shadow: inset 0 0 0 1px #dce7f2;
}
.focus .caption button { border-color: #5f7390; background: linear-gradient(#c5d7ea 50%, #9fb7d0 50%, #b5cde5); box-shadow: inset 0 0 0 1px #d3e2f2; }
.focus .caption .close { border-color: #4a1018; background: linear-gradient(#e4a79c 0, #d98b7d 50%, #b83a20 50%, #d4705c); box-shadow: inset 0 0 0 1px #e2a69c; }
.client { flex: 1 1 0px; min-height: 0; border: 2px solid #696969; border-top-color: #787878; border-right-color: #fff; border-bottom-color: #fff; overflow: hidden; }

.plot {
  display: grid;
  grid-template: 18px minmax(0, 1fr) 25px / 24px minmax(0, 1fr) 9px;
  background: #000;
  color: #b4b4b4;
  font: bold 12px/14px "Liberation Sans", Arial, sans-serif;
}
.legend { grid-area: 1 / 2; display: grid; grid-template-columns: repeat(3, 1fr); padding-right: 3px; font-size: 13px; line-height: 16px; text-align: center; }
.green { color: #0f0; }
.blue { color: #00f; }
.red { color: #f00; }
.yaxis { grid-area: 2 / 1; display: flex; flex-direction: column; justify-content: space-between; }
.yaxis span { height: 1px; display: flex; align-items: center; justify-content: flex-end; gap: 1px; }
.yaxis span::after { content: ""; width: 7px; height: 1px; background: #b4b4b4; }
.traces { grid-area: 2 / 2; width: 100%; height: 100%; border: 1px solid #b4b4b4; shape-rendering: crispEdges; }
.xaxis { grid-area: 3 / 2; display: flex; justify-content: space-between; }
.xaxis span { width: 1px; display: flex; flex-direction: column; align-items: center; gap: 3px; }
.xaxis span::before { content: ""; width: 1px; height: 6px; background: #b4b4b4; }

.sheet { display: flex; align-items: center; justify-content: center; background: #c0c0c0; }
.circuit { width: 480px; height: 400px; shape-rendering: crispEdges; }
.parts { font: bold 27px "Liberation Sans", Arial, sans-serif; }

.status { height: 21px; padding: 4px 2px 0; line-height: 16px; border-top: 1px solid #fff; box-shadow: inset 0 1px #d8d8d8; }

.taskbar {
  height: 40px;
  display: flex;
  background: radial-gradient(ellipse 24px 5px at 852px 5px, #5c3b22, transparent), #10151e;
  color: #fff;
}
.start { width: 48px; display: grid; place-items: center; }
.search { width: 344px; padding: 0 9px; border: 0; background: #4a4f57; color: #fff; font: 15px "Open Sans", sans-serif; }
.search::placeholder { color: #b0b3b7; opacity: 1; }
.apps { display: flex; gap: 1px; padding-left: 3px; }
.apps button { position: relative; width: 48px; display: grid; place-items: center; }
.apps svg { width: 24px; height: 24px; overflow: visible; }
.run { background: linear-gradient(#8c9dc0, #8c9dc0) no-repeat 4px 100% / 40px 2px; }
.apps .current { background: linear-gradient(#8c9dc0, #8c9dc0) no-repeat 0 100% / 100% 2px, #333c49; }
.pst, .sk, .pp { font: bold 11px "Open Sans", sans-serif; fill: #0bc0ec; text-anchor: middle; }
.sk { font-size: 17px; fill: #fff; }
.pp { font-size: 14px; fill: #fff; }
.badge { position: absolute; left: 25px; top: 19px; height: 16px; border: 1px solid #8c929b; border-radius: 8px; background: #3d4651; font: 12px/14px "Open Sans", sans-serif; }
.badge.one { left: 27px; width: 17px; }
.badge.many { width: 28px; }
.tray { display: flex; margin-left: auto; }
.tray button { width: 24px; display: grid; place-items: center; }
.tray svg { width: 16px; height: 16px; }
.o { fill: none; stroke: #fff; stroke-width: 1; }
.tray .people { width: 36px; padding-right: 12px; }
.tray .pen { width: 32px; }
.tray .lang { width: 36px; }
.tray .clock { width: 74px; padding-right: 8px; place-content: center; line-height: 18px; text-align: center; }
.tray .center { margin-right: 16px; }
.peek { width: 5px; border-left: 1px solid #555b63; }
```
